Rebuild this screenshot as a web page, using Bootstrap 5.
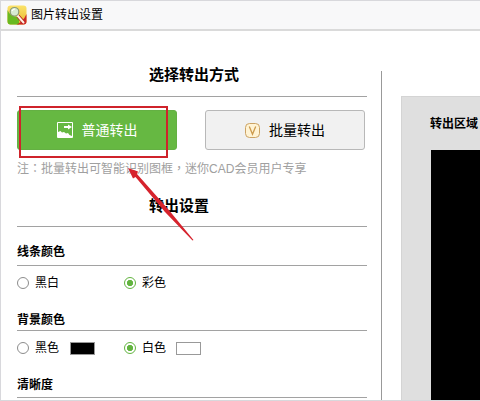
<!DOCTYPE html>
<html lang="zh-CN">
<head>
<meta charset="utf-8">
<meta name="viewport" content="width=device-width, initial-scale=1">
<title>图片转出设置</title>
<link href="https://cdn.jsdelivr.net/npm/bootstrap@5.3.0/dist/css/bootstrap.min.css" rel="stylesheet">
<style>
body{font-family:"Liberation Sans","Noto Sans CJK SC",sans-serif;font-size:12px;line-height:18px;color:#000;background:#fff}
.dialog{width:480px;height:401px;border:1px solid #d8d8dc;border-right:0}
.titlebar{height:30px;flex:none;background:#f8f8f9;border-bottom:2px solid #dadada;padding:0 0 1px 6px;gap:4px}
.pane{width:350px;margin-left:16px;flex:none}
.rule{border-bottom:1px solid #a2a2a2}
.heading{font-size:15px;line-height:22px;font-weight:700;padding-left:132px;margin:0}
.heading-mode{height:66px;padding-top:33px}
.heading-set{height:48px;padding-top:16px}
.mode-row{gap:28px;padding-top:13px}
.mode{width:160px;height:40px;font-size:14px;line-height:20px;border-radius:3px;padding:0;gap:9px}
.mode-on,.mode-on:hover{background:#66b842;border:1px solid #64b043;color:#fff}
.mode-off,.mode-off:hover{background:#f1f1f1;border:1px solid #b8b8b8;color:#000}
.note{height:29px;padding-top:9px;color:#a0a0a0}
.punct{font-family:"Noto Sans CJK TC",sans-serif}
.group-title{font-size:12px;line-height:18px;font-weight:700;margin:0}
.group-line{height:39px;padding-top:16px}
.group-bg{height:30px;padding-top:10px}
.group-clear{height:32px;padding-top:10px}
.options{height:35px;padding-bottom:1px}
.choice{width:107px;gap:6px}
.choice .form-check-input{width:12px;height:12px;margin:0;border:1px solid #8c8c8c;box-shadow:none;flex:none}
.choice .form-check-input:checked{background:radial-gradient(circle,#62b43f 0 2.8px,#fff 3.5px);border-color:#62b43f}
.swatch{width:25px;height:13px;border:1px solid #999;margin-left:5px}
.swatch.bg-white{margin-left:4px}
.divider{width:1px;background:#999;margin:40px 0 0 14px;flex:none}
.preview{margin:65px 0 0 19px;background:#dfdfdf;border:1px solid #d4d4d4;border-width:1px 0 0 1px;min-width:0}
.preview-title{font-weight:700;height:53px;padding:18px 0 0 28px;white-space:nowrap}
.canvas{background:#000;margin-left:29px}
.marker{left:19px;top:106px;width:149px;height:52px;border:2px solid #cf232b}
.arrow{left:0;top:0;pointer-events:none}
</style>
</head>
<body class="overflow-hidden">
<div class="dialog d-flex flex-column position-relative overflow-hidden">
  <header class="titlebar d-flex align-items-center">
    <svg width="20" height="20" viewBox="0 0 20 20" aria-hidden="true">
      <defs><linearGradient id="yl" x2="0" y2="1"><stop stop-color="#fbe36a"/><stop offset="1" stop-color="#e9b62b"/></linearGradient></defs>
      <rect x=".5" y=".5" width="19" height="19" rx="3" fill="url(#yl)"/>
      <path d="M.5 5Q3 12 12 12V19.500H3.500Q.5 19.500 .5 16Z" fill="#69b921"/>
      <path d="M9.500 19.500Q16 17 19.500 9V16.500Q19.500 19.500 16.500 19.500Z" fill="#ce2527"/>
      <path d="M11 11 17 18" stroke="#b52222" stroke-width="3.500"/>
      <path d="M10 10 16.500 17.500" stroke="#fff1e2" stroke-width="2" stroke-linecap="round"/>
      <circle cx="7.500" cy="6.800" r="4.300" fill="#d7ead1" stroke="#899a76" stroke-width="1.200"/>
      <path d="M5 6Q6 4 8 4" fill="none" stroke="#fff" stroke-width="1.200"/>
    </svg>
    <span>图片转出设置</span>
  </header>
  <main class="d-flex flex-grow-1">
    <section class="pane">
      <h2 class="heading heading-mode rule">选择转出方式</h2>
      <div class="d-flex mode-row">
        <button class="btn mode mode-on d-flex align-items-center justify-content-center" type="button">
          <svg width="16" height="16" viewBox="0 0 16 16" aria-hidden="true"><path d="M.5.500H15.500V15.500H.5Z" fill="none" stroke="#fff"/><path d="M1 10 3.500 9 5 10.500 7 10 9 11.500 11 11 12.500 13 15 14V15.500H1Z" fill="#fff"/><path d="M7 4H11V2.500L15 5 11 7.500V6H7Z" fill="#fff"/></svg>
          <span>普通转出</span>
        </button>
        <button class="btn mode mode-off d-flex align-items-center justify-content-center" type="button">
          <svg width="15" height="15" viewBox="0 0 15 15" aria-hidden="true"><rect x=".5" y=".5" width="14" height="14" rx="4" fill="#fff3d4" stroke="#cba263"/><path d="M4.300 3.500 7.500 11.300 10.700 3.500" fill="none" stroke="#cc9a4c" stroke-width="1.300"/></svg>
          <span>批量转出</span>
        </button>
      </div>
      <div class="note text-nowrap">注<span class="punct" lang="zh-TW">：</span>批量转出可智能识别图框<span class="punct" lang="zh-TW">，</span>迷你CAD会员用户专享</div>
      <h2 class="heading heading-set rule">转出设置</h2>
      <h3 class="group-title group-line rule">线条颜色</h3>
      <div class="d-flex options">
        <label class="choice d-flex align-items-center"><input class="form-check-input" type="radio" name="line"><span>黑白</span></label>
        <label class="choice d-flex align-items-center"><input class="form-check-input" type="radio" name="line" checked><span>彩色</span></label>
      </div>
      <h3 class="group-title group-bg rule">背景颜色</h3>
      <div class="d-flex options">
        <label class="choice d-flex align-items-center"><input class="form-check-input" type="radio" name="bg"><span>黑色</span><i class="swatch bg-black"></i></label>
        <label class="choice d-flex align-items-center"><input class="form-check-input" type="radio" name="bg" checked><span>白色</span><i class="swatch bg-white"></i></label>
      </div>
      <h3 class="group-title group-clear rule">清晰度</h3>
    </section>
    <div class="divider"></div>
    <section class="preview d-flex flex-column flex-grow-1">
      <div class="preview-title">转出区域</div>
      <div class="canvas flex-grow-1"></div>
    </section>
  </main>
</div>
<div class="marker position-absolute"></div>
<svg class="arrow position-absolute" width="480" height="401" viewBox="0 0 480 401" aria-hidden="true"><path d="M128 168 138 171.500 137 174 168 209 193.500 240 192.500 240.500 165 212 135.500 177 133 178.500Z" fill="#d6232d"/></svg>
<script src="https://cdn.jsdelivr.net/npm/bootstrap@5.3.0/dist/js/bootstrap.bundle.min.js"></script>
</body>
</html>
